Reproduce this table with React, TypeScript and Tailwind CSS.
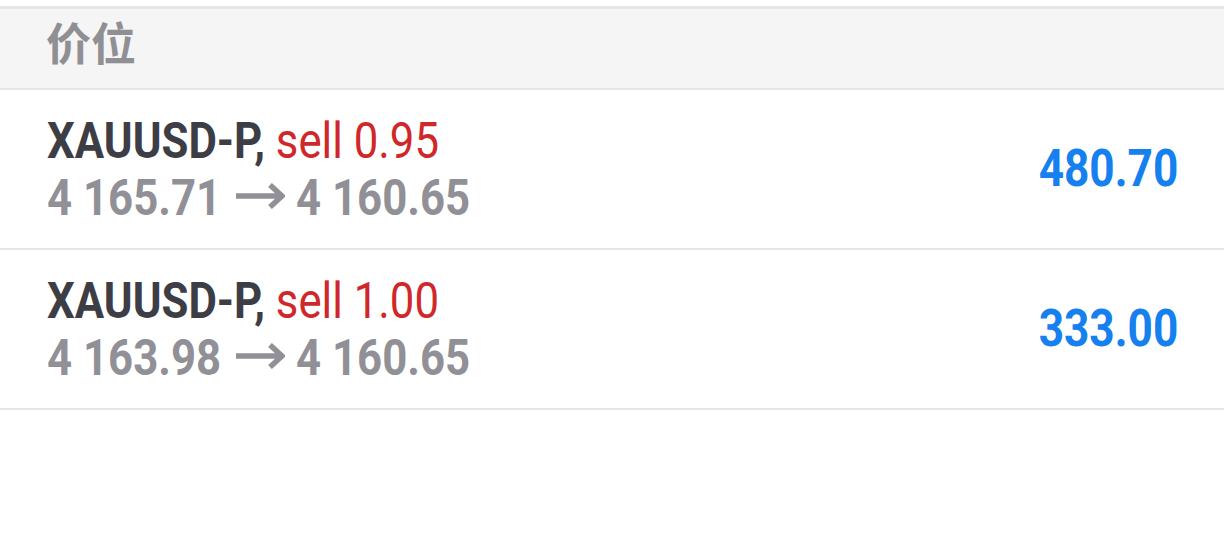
import React from "react";

const rows = [
  { sym: "XAUUSD-P,", side: "sell 0.95", from: "4 165.71", to: "4 160.65", profit: "480.70" },
  { sym: "XAUUSD-P,", side: "sell 1.00", from: "4 163.98", to: "4 160.65", profit: "333.00" },
];

function Arrow() {
  return (
    <svg width="50" height="26" viewBox="0 0 50 26" className="inline-block ml-[17px] mr-[11px] align-middle relative top-[-3px]">
      <path d="M1 13 H46 M35 2 L47 13 L35 24" fill="none" stroke="#909096" strokeWidth="5.5" strokeLinecap="butt" strokeLinejoin="miter" />
    </svg>
  );
}

export default function App() {
  return (
    <div className="w-[1224px] h-[539px] bg-white overflow-hidden" style={{ fontFamily: "Roboto, 'Noto Sans CJK SC', sans-serif" }}>
      <div className="h-[6px]" />
      <div className="h-[84px] bg-[#f5f5f5] border-t-[3px] border-b-[2px] border-[#e6e6e8] flex items-center pl-[46px] pb-[14px]">
        <span className="text-[45px] font-bold text-[#8f8f94] leading-none" style={{ fontFamily: "'Noto Sans CJK SC', sans-serif" }}>价位</span>
      </div>
      {rows.map((r, i) => (
        <div key={i} className="h-[160px] border-b-[2px] border-[#e6e6e8] flex items-center justify-between pl-[47px] pr-[46px]">
          <div className="flex flex-col leading-[57px] pt-[2px]">
            <div className="origin-left scale-x-[0.875] whitespace-nowrap text-[50px]">
              <span className="font-bold text-[#3d3d45]">{r.sym}</span>{" "}
              <span className="text-[#d0282a]">{r.side}</span>
            </div>
            <div className="whitespace-nowrap text-[50px] font-bold text-[#909096] flex items-center">
              <span className="inline-block origin-left scale-x-[0.875] w-[171px]">{r.from}</span>
              <Arrow />
              <span className="inline-block origin-left scale-x-[0.875]">{r.to}</span>
            </div>
          </div>
          <div className="origin-right scale-x-[0.85] whitespace-nowrap text-[52px] font-bold text-[#1580ee] leading-none">
            {r.profit}
          </div>
        </div>
      ))}
    </div>
  );
}
